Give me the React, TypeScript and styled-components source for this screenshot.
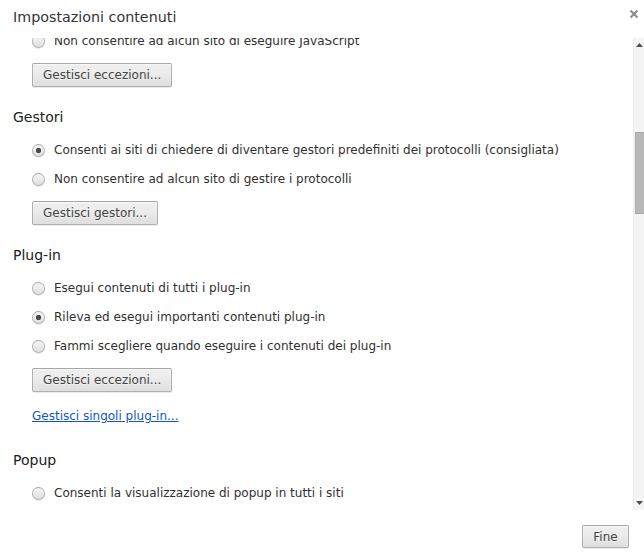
import React, { useLayoutEffect, useRef } from 'react';
import styled, { createGlobalStyle } from 'styled-components';

const GlobalStyle = createGlobalStyle`
  html, body {
    margin: 0;
    padding: 0;
    background: #fff;
  }
  body {
    font-family: 'DejaVu Sans', 'Liberation Sans', sans-serif;
    font-size: 12px;
    color: #303030;
  }
  * {
    box-sizing: border-box;
  }
`;

const Dialog = styled.div`
  width: 644px;
  height: 555px;
  display: flex;
  flex-direction: column;
  background: #fff;
  overflow: hidden;
`;

const Header = styled.div`
  height: 38px;
  flex: none;
  display: flex;
  align-items: flex-start;
  justify-content: space-between;
  padding: 9px 3px 0 13px;
`;

const Title = styled.h1`
  margin: 0;
  font-size: 14.3px;
  font-weight: normal;
  line-height: 17px;
  color: #333;
`;

const CloseButton = styled.button`
  width: 14px;
  height: 14px;
  padding: 0;
  margin-top: -2px;
  border: none;
  background: transparent;
  display: flex;
  align-items: center;
  justify-content: center;
  cursor: pointer;
`;

const Body = styled.div`
  height: 472px;
  flex: none;
  display: flex;
`;

const Scroller = styled.div`
  flex: 1;
  overflow: hidden;
`;

const Section = styled.section<{ $last?: boolean }>`
  padding-left: 13px;
  margin-bottom: ${p => (p.$last ? 0 : 21)}px;
`;

const SectionTitle = styled.h3`
  margin: 0 0 10px;
  font-size: 14px;
  font-weight: normal;
  line-height: 18px;
  color: #202020;
`;

const Options = styled.div`
  padding-left: 19px;
  display: flex;
  flex-direction: column;
  align-items: flex-start;
`;

const RadioRow = styled.label`
  height: 29px;
  display: flex;
  align-items: center;
  line-height: 15px;
  white-space: nowrap;
`;

const Radio = styled.input.attrs({ type: 'radio' })`
  appearance: none;
  -webkit-appearance: none;
  width: 13px;
  height: 13px;
  margin: 0 9px 0 0;
  border: 1px solid rgba(0, 0, 0, 0.25);
  border-radius: 50%;
  background: linear-gradient(#ededed, #ededed 38%, #dedede);
  box-shadow: 0 1px 0 rgba(0, 0, 0, 0.08), inset 0 1px 2px rgba(255, 255, 255, 0.75);
  flex: none;

  &:checked {
    background: radial-gradient(circle, #4a4a4a 0, #4a4a4a 2.4px, transparent 3px),
      linear-gradient(#ededed, #ededed 38%, #dedede);
  }
`;

const Button = styled.button`
  height: 24px;
  margin-top: 7px;
  padding: 0 10px;
  font-family: 'DejaVu Sans', 'Liberation Sans', sans-serif;
  font-size: 12px;
  color: #444;
  border: 1px solid rgba(0, 0, 0, 0.25);
  border-radius: 2px;
  background: linear-gradient(#ededed, #ededed 38%, #dedede);
  box-shadow: 0 1px 0 rgba(0, 0, 0, 0.08), inset 0 1px 2px rgba(255, 255, 255, 0.75);
  text-shadow: 0 1px 0 #f0f0f0;
  cursor: pointer;
`;

const Link = styled.a`
  display: block;
  margin: 16px 0 6px;
  line-height: 16px;
  color: #15c;
  text-decoration: underline;
  cursor: pointer;
`;

const ScrollTrack = styled.div`
  width: 11px;
  flex: none;
  display: flex;
  flex-direction: column;
  background: #f4f4f4;
  border-left: 1px solid #ececec;
`;

const ScrollArrow = styled.div`
  height: 14px;
  flex: none;
  display: flex;
  align-items: center;
  justify-content: center;
`;

const ScrollRail = styled.div`
  flex: 1;
  padding-left: 1px;
`;

const ScrollThumb = styled.div<{ $top: number; $height: number }>`
  margin-top: ${p => p.$top}px;
  height: ${p => p.$height}px;
  background: #b8b8b8;
  border: 1px solid #aaa;
  border-right: none;
`;

const Footer = styled.div`
  flex: 1;
  display: flex;
  justify-content: flex-end;
  align-items: flex-start;
  padding: 15px 15px 0;
`;

const FooterButton = styled(Button)`
  margin-top: 0;
  height: 23px;
  min-width: 47px;
`;

type Option = { label: string; checked?: boolean };

type SettingsSection = {
  title: string;
  name: string;
  options: Option[];
  button?: string;
  link?: string;
};

const sections: SettingsSection[] = [
  {
    title: 'JavaScript',
    name: 'javascript',
    options: [
      { label: 'Consenti a tutti i siti di eseguire JavaScript (consigliata)', checked: true },
      { label: 'Non consentire ad alcun sito di eseguire JavaScript' },
    ],
    button: 'Gestisci eccezioni...',
  },
  {
    title: 'Gestori',
    name: 'handlers',
    options: [
      { label: 'Consenti ai siti di chiedere di diventare gestori predefiniti dei protocolli (consigliata)', checked: true },
      { label: 'Non consentire ad alcun sito di gestire i protocolli' },
    ],
    button: 'Gestisci gestori...',
  },
  {
    title: 'Plug-in',
    name: 'plugins',
    options: [
      { label: 'Esegui contenuti di tutti i plug-in' },
      { label: 'Rileva ed esegui importanti contenuti plug-in', checked: true },
      { label: 'Fammi scegliere quando eseguire i contenuti dei plug-in' },
    ],
    button: 'Gestisci eccezioni...',
    link: 'Gestisci singoli plug-in...',
  },
  {
    title: 'Popup',
    name: 'popups',
    options: [
      { label: 'Consenti la visualizzazione di popup in tutti i siti' },
      { label: 'Non consentire ad alcun sito di mostrare popup (consigliata)', checked: true },
    ],
    button: 'Gestisci eccezioni...',
  },
];

const CloseIcon = () => (
  <svg width="10" height="10" viewBox="0 0 10 10">
    <path d="M1.5 1.5 L8.5 8.5 M8.5 1.5 L1.5 8.5" stroke="#8a8a8a" strokeWidth="2" />
  </svg>
);

const ArrowIcon: React.FC<{ down?: boolean }> = ({ down }) => (
  <svg width="7" height="4" viewBox="0 0 7 4">
    <path d={down ? 'M0 0 H7 L3.5 4 Z' : 'M0 4 H7 L3.5 0 Z'} fill="#505050" />
  </svg>
);

const App: React.FC = () => {
  const scrollRef = useRef<HTMLDivElement>(null);

  // the list is shown scrolled part way down, as in the settings overlay
  useLayoutEffect(() => {
    if (scrollRef.current) scrollRef.current.scrollTop = 68;
  }, []);

  return (
    <>
      <GlobalStyle />
      <Dialog>
        <Header>
          <Title>Impostazioni contenuti</Title>
          <CloseButton aria-label="Chiudi">
            <CloseIcon />
          </CloseButton>
        </Header>
        <Body>
          <Scroller ref={scrollRef}>
            {sections.map((section, i) => (
              <Section key={section.name} $last={i === sections.length - 1}>
                <SectionTitle>{section.title}</SectionTitle>
                <Options>
                  {section.options.map(opt => (
                    <RadioRow key={opt.label}>
                      <Radio name={section.name} defaultChecked={opt.checked} />
                      {opt.label}
                    </RadioRow>
                  ))}
                  {section.button && <Button>{section.button}</Button>}
                  {section.link && <Link>{section.link}</Link>}
                </Options>
              </Section>
            ))}
          </Scroller>
          <ScrollTrack>
            <ScrollArrow>
              <ArrowIcon />
            </ScrollArrow>
            <ScrollRail>
              <ScrollThumb $top={80} $height={82} />
            </ScrollRail>
            <ScrollArrow>
              <ArrowIcon down />
            </ScrollArrow>
          </ScrollTrack>
        </Body>
        <Footer>
          <FooterButton>Fine</FooterButton>
        </Footer>
      </Dialog>
    </>
  );
};

export default App;
